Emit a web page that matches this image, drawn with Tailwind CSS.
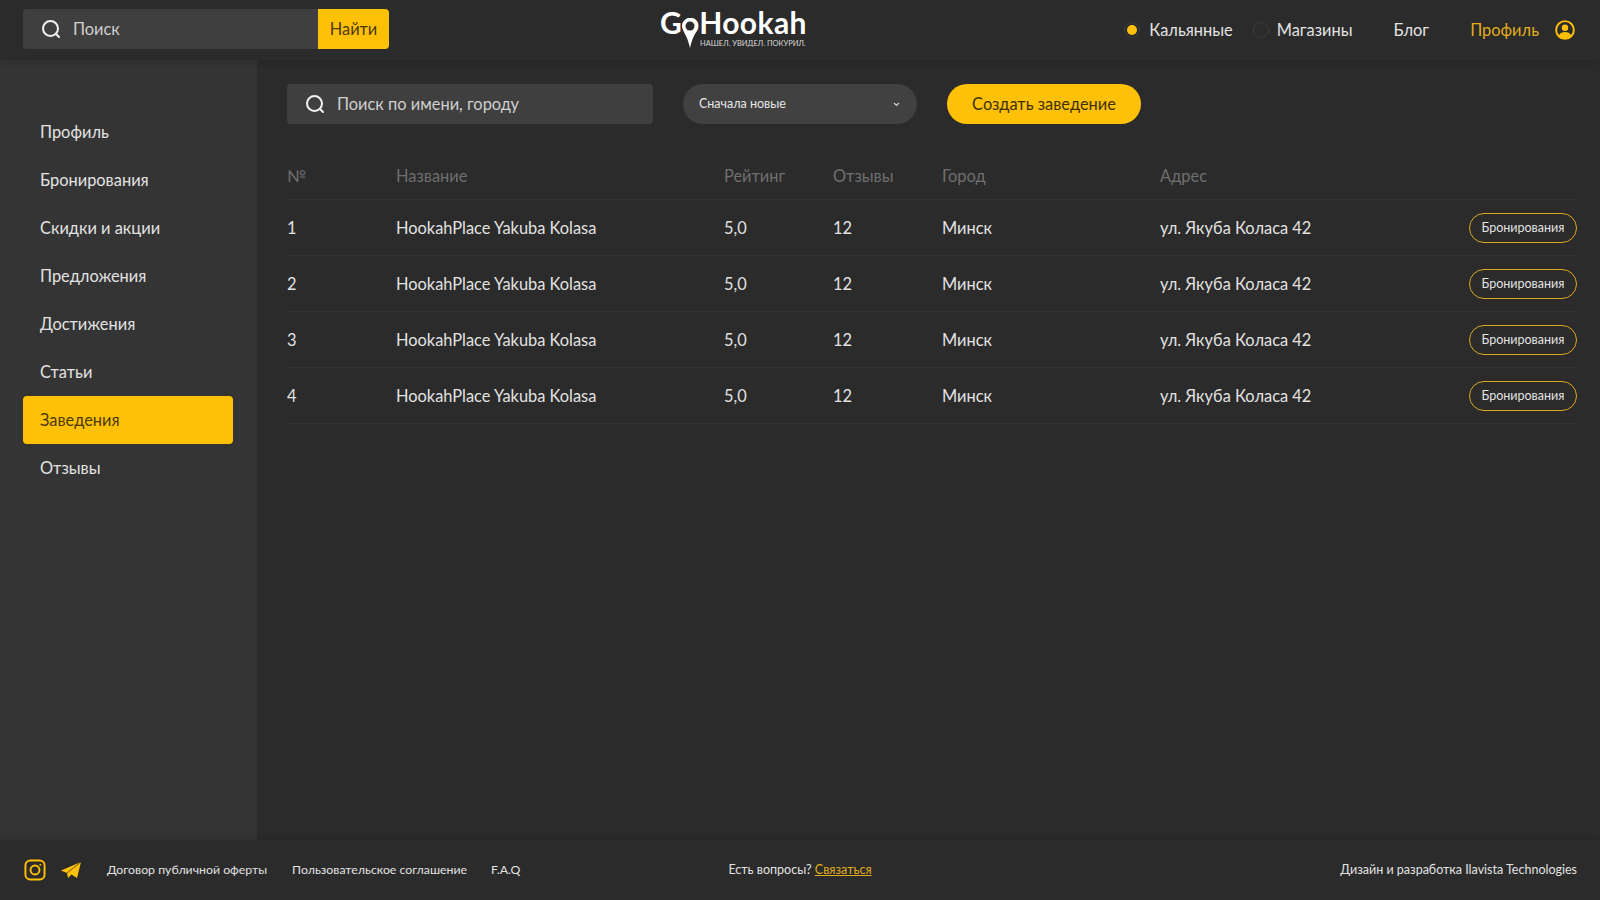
<!DOCTYPE html>
<html lang="ru">
<head>
  <meta charset="utf-8">
  <title>GoHookah</title>
  <script src="https://cdn.jsdelivr.net/npm/@tailwindcss/browser@4"></script>
</head>
<body class="bg-[#2b2b2b] text-[#e2e2e2] font-['Lato','Noto_Sans',sans-serif] text-[16.4px] overflow-hidden">
<div class="flex flex-col h-[900px] w-[1600px]">

  <!-- шапка -->
  <header class="relative z-10 h-[60px] shrink-0 flex items-center pl-[23px] pr-[25px] bg-[#2b2b2b] shadow-[0_2px_8px_rgba(0,0,0,0.12)]">
    <div class="flex h-10 w-[366px] mb-[2px] rounded-[4px] overflow-hidden">
      <div class="flex-1 flex items-center gap-[11px] pl-[17px] bg-[#3f3f3f]">
        <svg class="w-[22px] h-[22px]" viewBox="0 0 22 22" fill="none" stroke="#f2f2f2" stroke-width="2" stroke-linecap="round"><circle cx="10.5" cy="10.5" r="7.5"/><path d="M16 16l3 3"/></svg>
        <span class="text-[#cfcfcf]">Поиск</span>
      </div>
      <div class="w-[71px] flex items-center justify-center bg-[#ffc107] text-[#4a3a08]">Найти</div>
    </div>

    <div class="relative w-[148px] h-[48px] ml-[271px] text-white">
      <div class="absolute left-0 top-px text-[30px] leading-[30px] font-bold tracking-[0.4px]">GoHookah</div>
      <svg class="absolute left-[22px] top-[12px] w-4 h-[30px]" viewBox="0 0 16 30"><path d="M8 0a8 8 0 0 0-8 8c0 5 5 8 8 22c3-14 8-17 8-22a8 8 0 0 0-8-8z" fill="#fff"/><circle cx="8" cy="8" r="4.5" fill="#2b2b2b"/></svg>
      <div class="absolute left-[40px] top-[33px] text-[7.5px] leading-[10px] text-[#d8d8d8] whitespace-nowrap">НАШЕЛ. УВИДЕЛ. ПОКУРИЛ.</div>
    </div>

    <nav class="ml-auto flex items-center">
      <div class="flex items-center gap-[9px]">
        <span class="w-4 h-4 rounded-full border border-[#3c3c3c] flex items-center justify-center"><span class="w-[10px] h-[10px] rounded-full bg-[#ffc107]"></span></span>
        <span>Кальянные</span>
      </div>
      <div class="flex items-center gap-2 ml-5">
        <span class="w-4 h-4 rounded-full border border-[#3c3c3c]"></span>
        <span>Магазины</span>
      </div>
      <span class="ml-[41px]">Блог</span>
      <span class="ml-[41px] text-[#e0ac1c]">Профиль</span>
      <svg class="ml-4 w-5 h-5" viewBox="0 0 21 21" fill="none"><circle cx="10.5" cy="10.5" r="9.3" stroke="#ffc107" stroke-width="2"/><circle cx="10.5" cy="8.2" r="3.4" fill="#ffc107"/><path d="M4 16.5c1.2-3 3.600-4 6.500-4s5.300 1 6.500 4a9 9 0 0 1-13 0z" fill="#ffc107"/></svg>
    </nav>
  </header>

  <div class="flex-1 flex min-h-0">
    <!-- боковое меню -->
    <aside class="w-[257px] shrink-0 bg-[#343434] pt-12 pl-[23px] pr-6">
      <ul class="flex flex-col">
        <li class="h-12 flex items-center pl-[17px]">Профиль</li>
        <li class="h-12 flex items-center pl-[17px]">Бронирования</li>
        <li class="h-12 flex items-center pl-[17px]">Скидки и акции</li>
        <li class="h-12 flex items-center pl-[17px]">Предложения</li>
        <li class="h-12 flex items-center pl-[17px]">Достижения</li>
        <li class="h-12 flex items-center pl-[17px]">Статьи</li>
        <li class="h-12 flex items-center pl-[17px] rounded-[4px] bg-[#ffc107] text-[#4a3a08]">Заведения</li>
        <li class="h-12 flex items-center pl-[17px]">Отзывы</li>
      </ul>
    </aside>

    <!-- контент -->
    <main class="flex-1 pl-[30px] pr-[23px] pt-6">
      <div class="flex items-center gap-[30px]">
        <div class="w-[366px] h-10 flex items-center gap-[11px] pl-[17px] rounded-[4px] bg-[#3f3f3f]">
          <svg class="w-[22px] h-[22px]" viewBox="0 0 22 22" fill="none" stroke="#f2f2f2" stroke-width="2" stroke-linecap="round"><circle cx="10.500" cy="10.500" r="7.500"/><path d="M16 16l3 3"/></svg>
          <span class="text-[#cfcfcf]">Поиск по имени, городу</span>
        </div>
        <div class="w-[234px] h-10 flex items-center justify-between pl-4 pr-[17px] pt-px rounded-full bg-[#414141] text-[12.5px] text-[#e6e6e6]">
          <span>Сначала новые</span>
          <svg class="w-[7px] h-[5px]" viewBox="0 0 7 5" fill="none" stroke="#d0d0d0" stroke-width="1.200"><path d="M1 1l2.500 2.500L6 1"/></svg>
        </div>
        <div class="w-[194px] h-10 flex items-center justify-center rounded-full bg-[#ffc107] text-[#3d3006]">Создать заведение</div>
      </div>

      <div class="mt-[28px] grid grid-cols-[109px_328px_109px_109px_218px_1fr_auto] items-center h-12 pt-[2px] border-b border-[#353535] text-[#6f6f6f]">
        <span>№</span><span>Название</span><span>Рейтинг</span><span>Отзывы</span><span>Город</span><span>Адрес</span><span></span>
      </div>

      <div class="grid grid-cols-[109px_328px_109px_109px_218px_1fr_auto] items-center h-14 pt-[2px] border-b border-[#353535]">
        <span>1</span><span>HookahPlace Yakuba Kolasa</span><span>5,0</span><span>12</span><span>Минск</span><span>ул. Якуба Коласа 42</span>
        <span class="w-[108px] h-[30px] -mt-[2px] pt-px flex items-center justify-center rounded-full border border-[#ddaa1e] text-[12.5px]">Бронирования</span>
      </div>
      <div class="grid grid-cols-[109px_328px_109px_109px_218px_1fr_auto] items-center h-14 pt-[2px] border-b border-[#353535]">
        <span>2</span><span>HookahPlace Yakuba Kolasa</span><span>5,0</span><span>12</span><span>Минск</span><span>ул. Якуба Коласа 42</span>
        <span class="w-[108px] h-[30px] -mt-[2px] pt-px flex items-center justify-center rounded-full border border-[#ddaa1e] text-[12.5px]">Бронирования</span>
      </div>
      <div class="grid grid-cols-[109px_328px_109px_109px_218px_1fr_auto] items-center h-14 pt-[2px] border-b border-[#353535]">
        <span>3</span><span>HookahPlace Yakuba Kolasa</span><span>5,0</span><span>12</span><span>Минск</span><span>ул. Якуба Коласа 42</span>
        <span class="w-[108px] h-[30px] -mt-[2px] pt-px flex items-center justify-center rounded-full border border-[#ddaa1e] text-[12.5px]">Бронирования</span>
      </div>
      <div class="grid grid-cols-[109px_328px_109px_109px_218px_1fr_auto] items-center h-14 pt-[2px] border-b border-[#353535]">
        <span>4</span><span>HookahPlace Yakuba Kolasa</span><span>5,0</span><span>12</span><span>Минск</span><span>ул. Якуба Коласа 42</span>
        <span class="w-[108px] h-[30px] -mt-[2px] pt-px flex items-center justify-center rounded-full border border-[#ddaa1e] text-[12.5px]">Бронирования</span>
      </div>
    </main>
  </div>

  <!-- подвал -->
  <footer class="relative z-10 h-[60px] shrink-0 grid grid-cols-3 items-center px-[23px] bg-[#2b2b2b] shadow-[0_-2px_8px_rgba(0,0,0,0.12)] text-[12.5px]">
    <div class="flex items-center whitespace-nowrap text-[12.3px]">
      <svg class="ml-px w-[22px] h-[22px]" viewBox="0 0 23 23" fill="none" stroke="#ffc107" stroke-width="2"><rect x="1.500" y="1.500" width="20" height="20" rx="5"/><circle cx="11.500" cy="11.500" r="4.700"/><circle cx="17" cy="6" r="1" fill="#ffc107" stroke="none"/></svg>
      <svg class="ml-[15px] w-5 h-4" viewBox="0 0 20 16"><path d="M20 0L0 8.500 6 11l1 5 3.500-3.500L16 16z" fill="#ffc107"/><path d="M6 11L20 0" stroke="#2b2b2b" stroke-width="0.700"/></svg>
      <span class="ml-[26px]">Договор публичной оферты</span>
      <span class="ml-[25px]">Пользовательское соглашение</span>
      <span class="ml-6">F.A.Q</span>
    </div>
    <div class="text-center whitespace-nowrap">Есть вопросы? <span class="text-[#e0ac1c] underline">Связаться</span></div>
    <div class="text-right whitespace-nowrap">Дизайн и разработка Ilavista Technologies</div>
  </footer>
</div>
</body>
</html>
